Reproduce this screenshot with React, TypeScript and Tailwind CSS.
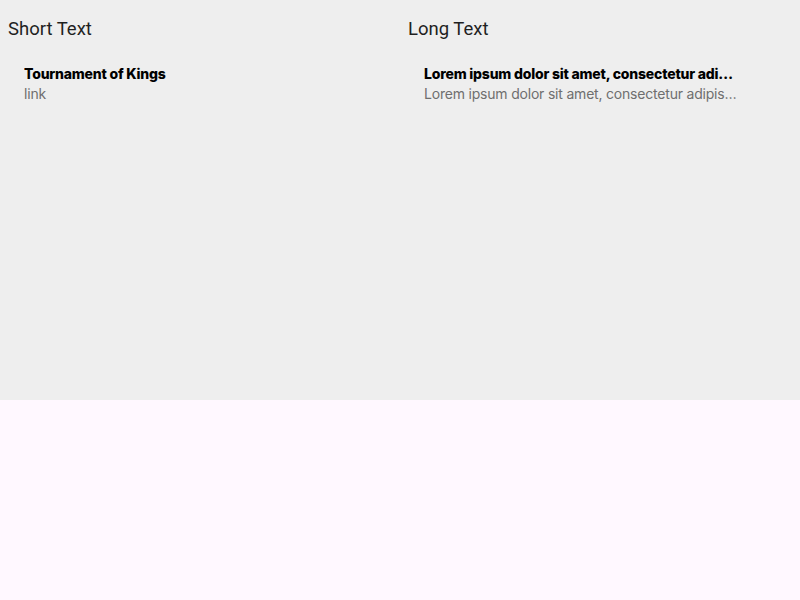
import React from 'react';

interface ItemProps {
  title: string;
  subtitle: string;
}

const ListItem: React.FC<ItemProps> = ({ title, subtitle }) => (
  <div className="w-[352px] px-4 py-2">
    <div className="truncate text-[14px] leading-5 font-extrabold text-black font-['Inter',sans-serif] tracking-[-0.2px]">
      {title}
    </div>
    <div className="truncate text-[14px] leading-5 text-[#6f6f6f] font-['Inter',sans-serif] tracking-[-0.2px]">
      {subtitle}
    </div>
  </div>
);

const Column: React.FC<{ heading: string; children: React.ReactNode }> = ({ heading, children }) => (
  <div className="flex-1 min-w-0 p-2">
    <h2 className="mt-px mb-[7px] text-[18.5px] leading-10 text-[#1f1f1f] font-['Roboto',sans-serif]">
      {heading}
    </h2>
    {children}
  </div>
);

export default function App() {
  return (
    <div className="min-h-[600px] bg-[#fff8ff]">
      <div className="h-[400px] bg-[#eeeeee] flex overflow-hidden">
        <Column heading="Short Text">
          <ListItem title="Tournament of Kings" subtitle="link" />
        </Column>
        <Column heading="Long Text">
          <ListItem
            title="Lorem ipsum dolor sit amet, consectetur adi…"
            subtitle="Lorem ipsum dolor sit amet, consectetur adipis…"
          />
        </Column>
      </div>
    </div>
  );
}
